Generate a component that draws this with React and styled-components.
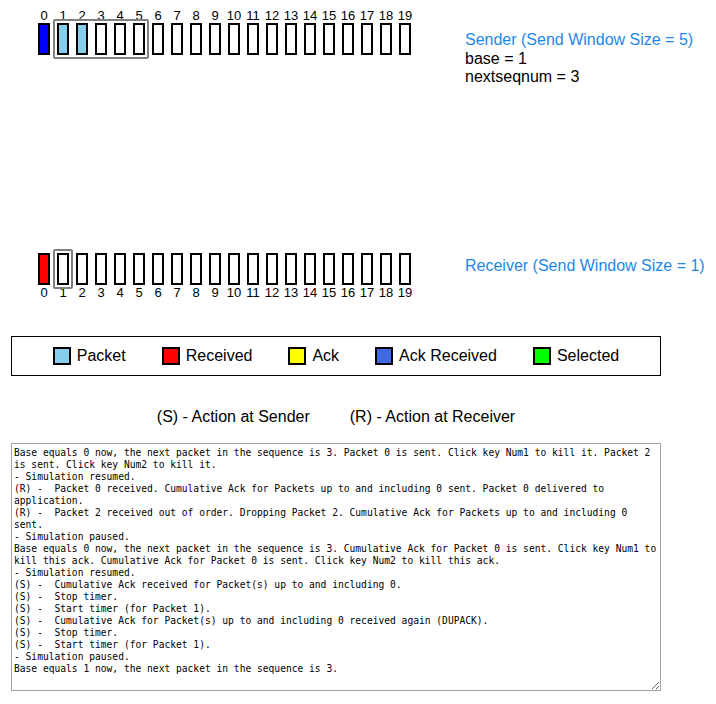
import styled, { createGlobalStyle } from "styled-components";

const GlobalStyle = createGlobalStyle`
    body {
        margin: 0;
        background: #ffffff;
        font-family: "Liberation Sans", Arial, sans-serif;
        color: #000000;
    }
`;

const Page = styled.div`
    width: 650px;
    padding-left: 11px;
    display: flex;
    flex-direction: column;
`;

const Section = styled.div`
    display: flex;
    flex-direction: row;
    align-items: flex-start;
    gap: 54px;
    padding-left: 27px;
    margin-top: ${(p) => p.$top}px;
`;

const Lane = styled.div`
    position: relative;
    display: flex;
    flex-direction: row;
    gap: 7px;
`;

const Slot = styled.div`
    width: 12px;
    display: flex;
    flex-direction: ${(p) => (p.$below ? "column-reverse" : "column")};
    align-items: center;
`;

const Num = styled.span`
    font-size: 13px;
    line-height: 15px;
    height: 15px;
    white-space: nowrap;
`;

const Box = styled.div`
    box-sizing: border-box;
    width: 12px;
    height: 32px;
    border: 2px solid #000000;
    background: ${(p) => p.$fill || "#ffffff"};
`;

const Window = styled.div`
    position: absolute;
    box-sizing: border-box;
    border: 2px solid #808080;
    border-radius: 2px;
    height: 40px;
    pointer-events: none;
`;

const Info = styled.div`
    margin-top: ${(p) => p.$top}px;
    font-size: 16px;
    line-height: 18.5px;
    white-space: nowrap;
`;

const Title = styled.div`
    color: #1e88e5;
`;

const Legend = styled.div`
    margin-top: 36px;
    box-sizing: border-box;
    width: 650px;
    height: 40px;
    padding-top: 1px;
    border: 1px solid #000000;
    display: flex;
    align-items: center;
    justify-content: center;
    gap: 36px;
    font-size: 16px;
`;

const LegendItem = styled.div`
    display: flex;
    align-items: center;
    gap: 6px;
`;

const Swatch = styled.span`
    box-sizing: border-box;
    width: 18px;
    height: 18px;
    border: 2px solid #000000;
    background: ${(p) => p.$fill};
`;

const Actions = styled.div`
    margin-top: 32px;
    display: flex;
    justify-content: center;
    gap: 40px;
    font-size: 16px;
    line-height: 18.5px;
`;

const Log = styled.textarea`
    margin-top: 17px;
    box-sizing: border-box;
    width: 650px;
    height: 248px;
    padding: 3px 2px 2px;
    border: 1px solid #a2a2ad;
    font-family: "DejaVu Sans Mono", monospace;
    font-size: 9.62px;
    line-height: 12px;
    color: #000000;
    background: #ffffff;
    outline: none;
`;

const COUNT = 20;
const PITCH = 19;

const senderFill = (i) => (i === 0 ? "#0000ff" : i === 1 || i === 2 ? "#87ceeb" : null);
const receiverFill = (i) => (i === 0 ? "#ff0000" : null);

const legend = [
    { label: "Packet", fill: "#87ceeb" },
    { label: "Received", fill: "#ff0000" },
    { label: "Ack", fill: "#ffff00" },
    { label: "Ack Received", fill: "#4169e1" },
    { label: "Selected", fill: "#00ff00" },
];

const logText = [
    "Base equals 0 now, the next packet in the sequence is 3. Packet 0 is sent. Click key Num1 to kill it. Packet 2 is sent. Click key Num2 to kill it.",
    "- Simulation resumed.",
    "(R) -  Packet 0 received. Cumulative Ack for Packets up to and including 0 sent. Packet 0 delivered to application.",
    "(R) -  Packet 2 received out of order. Dropping Packet 2. Cumulative Ack for Packets up to and including 0 sent.",
    "- Simulation paused.",
    "Base equals 0 now, the next packet in the sequence is 3. Cumulative Ack for Packet 0 is sent. Click key Num1 to kill this ack. Cumulative Ack for Packet 0 is sent. Click key Num2 to kill this ack.",
    "- Simulation resumed.",
    "(S) -  Cumulative Ack received for Packet(s) up to and including 0.",
    "(S) -  Stop timer.",
    "(S) -  Start timer (for Packet 1).",
    "(S) -  Cumulative Ack for Packet(s) up to and including 0 received again (DUPACK).",
    "(S) -  Stop timer.",
    "(S) -  Start timer (for Packet 1).",
    "- Simulation paused.",
    "Base equals 1 now, the next packet in the sequence is 3.",
].join("\n");

function PacketLane({ fill, below, base, size }) {
    const slots = Array.from({ length: COUNT }, (_, i) => i);
    return (
        <Lane>
            {slots.map((i) => (
                <Slot key={i} $below={below}>
                    <Num>{i}</Num>
                    <Box $fill={fill(i)} />
                </Slot>
            ))}
            <Window
                style={{
                    left: base * PITCH - 4,
                    top: below ? -4 : 11,
                    width: size * PITCH - 7 + 8,
                }}
            />
        </Lane>
    );
}

export default function App() {
    return (
        <>
            <GlobalStyle />
            <Page>
                <Section $top={8}>
                    <PacketLane fill={senderFill} base={1} size={5} />
                    <Info $top={23}>
                        <Title>Sender (Send Window Size = 5)</Title>
                        <div>base = 1</div>
                        <div>nextseqnum = 3</div>
                    </Info>
                </Section>
                <Section $top={166}>
                    <PacketLane fill={receiverFill} below base={1} size={1} />
                    <Info $top={4}>
                        <Title>Receiver (Send Window Size = 1)</Title>
                    </Info>
                </Section>
                <Legend>
                    {legend.map((item) => (
                        <LegendItem key={item.label}>
                            <Swatch $fill={item.fill} />
                            <span>{item.label}</span>
                        </LegendItem>
                    ))}
                </Legend>
                <Actions>
                    <span>(S) - Action at Sender</span>
                    <span>(R) - Action at Receiver</span>
                </Actions>
                <Log readOnly defaultValue={logText} />
            </Page>
        </>
    );
}
